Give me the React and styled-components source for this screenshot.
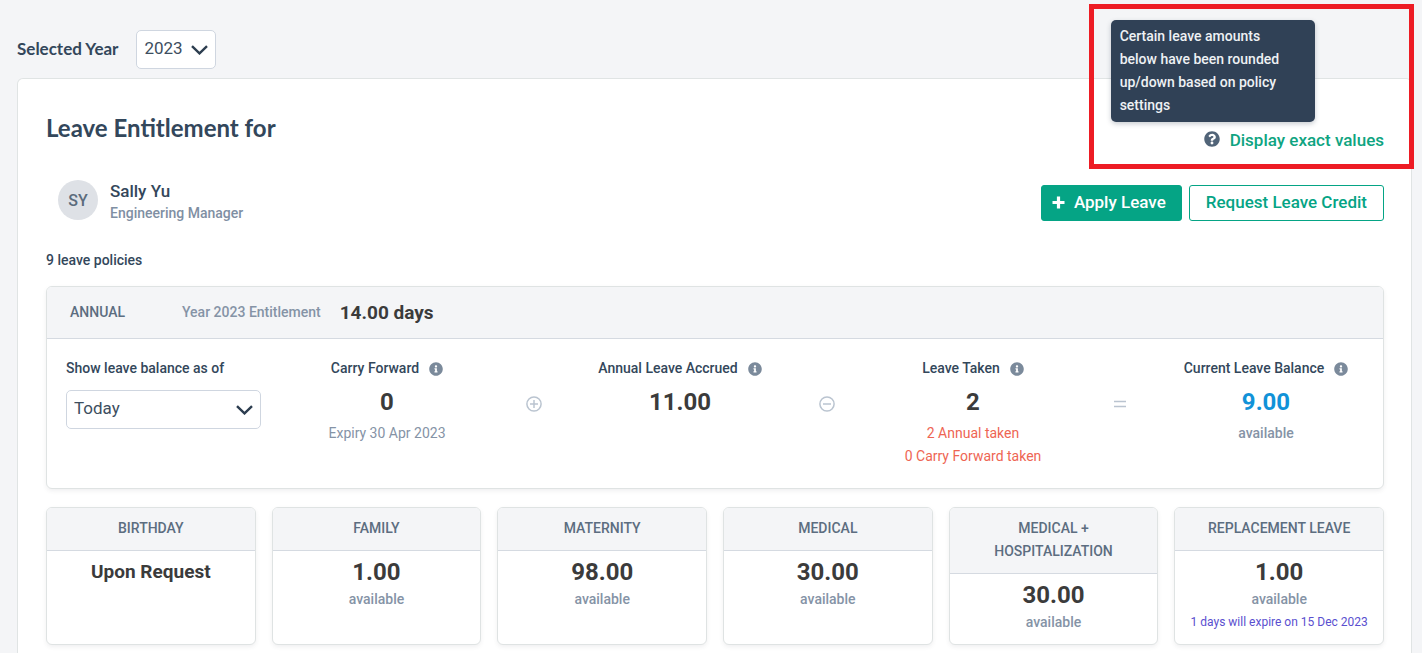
import React from 'react';
import styled, { createGlobalStyle } from 'styled-components';
import { FaQuestionCircle, FaInfoCircle } from 'react-icons/fa';

const GlobalStyle = createGlobalStyle`
  *, *::before, *::after { box-sizing: border-box; }
  body {
    margin: 0;
    background: #f4f5f7;
    color: #33475b;
    font-family: Roboto, "Liberation Sans", sans-serif;
    font-size: 14px;
    line-height: 23px;
  }
  html { scrollbar-width: none; }
  h1, h2, h3, p { margin: 0; }
`;

const Page = styled.div`
  position: relative;
  padding: 30px 10px 0 17px;
`;

const YearBar = styled.div`
  display: flex;
  align-items: center;
  gap: 18px;
  margin-bottom: 9px;
`;

const YearLabel = styled.label`
  padding-bottom: 2px;
  font: 700 17px/24px Lato, sans-serif;
`;

const SelectBox = styled.div`
  display: grid;
  align-items: center;
  width: ${(p) => p.$width};
  height: 39px;

  > * { grid-area: 1 / 1; }
  > svg { justify-self: end; margin-right: 8px; pointer-events: none; }
`;

const Select = styled.select`
  appearance: none;
  width: 100%;
  height: 100%;
  padding: 0 7px 3px;
  border: 1px solid #cfd6e0;
  border-radius: 5px;
  background: #fff;
  color: #3d4e60;
  font: 400 17px/24px Roboto, sans-serif;
`;

const Card = styled.main`
  padding: 35px 27px 8px 28px;
  border: 1px solid #e0e4e4;
  border-bottom: 0;
  border-radius: 6px 6px 0 0;
  background: #fff;
`;

const TitleRow = styled.div`
  display: flex;
  justify-content: space-between;
  align-items: flex-start;
`;

const Title = styled.h1`
  font: 700 24px/28px Lato, sans-serif;
`;

const ExactValues = styled.div`
  display: flex;
  align-items: center;
  gap: 10px;
  padding-top: 15px;
`;

const HelpAnchor = styled.span`
  position: relative;
  display: flex;
  padding-bottom: 3px;
  color: #516478;
`;

const Tooltip = styled.span`
  position: absolute;
  right: -95px;
  bottom: 28px;
  width: 204px;
  padding: 5px 24px 5px 9px;
  border-radius: 5px;
  background: #304156;
  color: #eef1f4;
  box-shadow: 0 2px 5px rgba(40, 55, 75, 0.25);
  font-weight: 500;
`;

const ExactLink = styled.a`
  color: #0fa481;
  font-size: 17px;
  font-weight: 500;
  text-decoration: none;
`;

const Highlight = styled.div`
  position: absolute;
  top: 4px;
  right: 8px;
  width: 325px;
  height: 165px;
  border: 5px solid #ed1c24;
  pointer-events: none;
`;

const PersonRow = styled.div`
  display: flex;
  justify-content: space-between;
  align-items: center;
  margin-top: 28px;
  padding-left: 12px;
`;

const Person = styled.div`
  display: flex;
  align-items: flex-start;
  gap: 12px;
`;

const Avatar = styled.span`
  display: grid;
  place-items: center;
  width: 40px;
  height: 40px;
  border-radius: 50%;
  background: #dee1e6;
  color: #5b6b7c;
  font-size: 16px;
  font-weight: 500;
`;

const Name = styled.h2`
  font-size: 17px;
  line-height: 22px;
  font-weight: 500;
`;

const Role = styled.p`
  color: #7f8fa3;
  font-weight: 500;
`;

const Actions = styled.div`
  display: flex;
  gap: 7px;
`;

const Button = styled.button`
  display: flex;
  align-items: center;
  gap: 9px;
  height: 36px;
  padding: 0 ${(p) => (p.$primary ? '15px 0 10px' : '16px')};
  border: 1px solid #05a485;
  border-radius: 3px;
  background: ${(p) => (p.$primary ? '#05a485' : '#fff')};
  color: ${(p) => (p.$primary ? '#fff' : '#05a485')};
  font: 500 17px/23px Roboto, sans-serif;
`;

const PolicyCount = styled.p`
  margin: 24px 0 14px;
  font-weight: 500;
`;

const Panel = styled.section`
  overflow: hidden;
  border: 1px solid #dfe3e3;
  border-radius: 6px;
  background: #fff;
  box-shadow: 0 2px 4px rgba(60, 70, 80, 0.08);
`;

const PanelHeader = styled.header`
  display: flex;
  align-items: center;
  height: 52px;
  padding: 0 23px;
  border-bottom: 1px solid #d5dae1;
  background: #f4f5f7;
`;

const PolicyName = styled.h2`
  width: 112px;
  color: #5c6d80;
  font-size: 14px;
  font-weight: 500;
`;

const Entitlement = styled.span`
  margin-right: 19px;
  color: #8593a6;
  font-weight: 500;
`;

const Days = styled.strong`
  color: #3b3b3b;
  font-size: 19px;
  font-weight: 700;
`;

const Balance = styled.div`
  display: grid;
  grid-template-columns: 231px 180fr repeat(3, 113fr 180fr);
  min-height: 149px;
  padding: 18px 27px 19px 19px;
`;

const FieldLabel = styled.label`
  display: block;
  margin-bottom: 10px;
  font-weight: 500;
`;

const Metric = styled.div`
  display: flex;
  flex-direction: column;
  align-items: center;
  text-align: center;
`;

const MetricLabel = styled.h3`
  display: flex;
  align-items: center;
  gap: 10px;
  font-size: 14px;
  font-weight: 500;
  white-space: nowrap;

  svg { color: #7b8a9b; }
`;

const Value = styled.strong`
  margin: ${(p) => (p.$panel ? '6px 0 4px' : '0')};
  color: ${(p) => (p.$accent ? '#1192d8' : '#3b3b3b')};
  font-size: ${(p) => (p.$text ? '19px' : '24px')};
  font-weight: 700;
  line-height: 32px;
`;

const Note = styled.span`
  color: ${(p) => ({ danger: '#ee6553', expiry: '#5a4fcf' })[p.$tone] || '#8593a6'};
  font-size: ${(p) => (p.$tone === 'expiry' ? '12px' : '14px')};
  font-weight: ${(p) => (p.$strong ? 500 : 400)};
  white-space: nowrap;
`;

const Operator = styled.div`
  display: flex;
  justify-content: center;
  padding-top: 39px;
`;

const PolicyGrid = styled.div`
  display: grid;
  grid-template-columns: repeat(6, minmax(0, 1fr));
  gap: 16px;
  margin-top: 18px;
`;

const PolicyHeader = styled.h2`
  padding: 9px 32px 10px;
  border-bottom: 1px solid #d5dae1;
  background: #f4f5f7;
  color: #5c6d80;
  font-size: 14px;
  font-weight: 500;
  line-height: 23px;
  text-align: center;
`;

const PolicyBody = styled.div`
  display: flex;
  flex-direction: column;
  align-items: center;
  padding: 5px 8px 10px;
`;

const Chevron = () => (
  <svg width="17" height="10" viewBox="0 0 17 10" fill="none" aria-hidden="true">
    <path d="M1 1.2 8.5 8.4 16 1.2" stroke="#2d3e50" strokeWidth="2.4" />
  </svg>
);

const PlusIcon = () => (
  <svg width="13" height="13" viewBox="0 0 13 13" fill="none" aria-hidden="true">
    <path d="M6.5 .5v12M.5 6.5h12" stroke="#fff" strokeWidth="3.2" strokeLinecap="butt" />
  </svg>
);

const OperatorIcon = ({ kind }) => (
  <svg width="16" height="16" viewBox="0 0 16 16" fill="none" stroke="#bac4d0" strokeWidth="1.5" role="img" aria-label={kind}>
    {kind === 'equals' ? (
      <path d="M2 5.5h12M2 10.5h12" />
    ) : (
      <>
        <circle cx="8" cy="8" r="7.1" />
        <path d={kind === 'plus' ? 'M4 8h8M8 4v8' : 'M4 8h8'} />
      </>
    )}
  </svg>
);

const metrics = [
  { label: 'Carry Forward', value: '0', notes: ['Expiry 30 Apr 2023'] },
  { operator: 'plus' },
  { label: 'Annual Leave Accrued', value: '11.00', notes: [] },
  { operator: 'minus' },
  { label: 'Leave Taken', value: '2', notes: ['2 Annual taken', '0 Carry Forward taken'], tone: 'danger' },
  { operator: 'equals' },
  { label: 'Current Leave Balance', value: '9.00', notes: ['available'], accent: true, strong: true },
];

const policies = [
  { name: 'BIRTHDAY', value: 'Upon Request', text: true },
  { name: 'FAMILY', value: '1.00' },
  { name: 'MATERNITY', value: '98.00' },
  { name: 'MEDICAL', value: '30.00' },
  { name: 'MEDICAL + HOSPITALIZATION', value: '30.00' },
  { name: 'REPLACEMENT LEAVE', value: '1.00', expiry: '1 days will expire on 15 Dec 2023' },
];

export default function App() {
  return (
    <Page>
      <GlobalStyle />
      <YearBar>
        <YearLabel htmlFor="year">Selected Year</YearLabel>
        <SelectBox $width="80px">
          <Select id="year" defaultValue="2023">
            <option>2023</option>
          </Select>
          <Chevron />
        </SelectBox>
      </YearBar>

      <Card>
        <TitleRow>
          <Title>Leave Entitlement for</Title>
          <ExactValues>
            <HelpAnchor>
              <FaQuestionCircle size={16} />
              <Tooltip role="tooltip">
                Certain leave amounts below have been rounded up/down based on policy settings
              </Tooltip>
            </HelpAnchor>
            <ExactLink href="#exact">Display exact values</ExactLink>
          </ExactValues>
        </TitleRow>

        <PersonRow>
          <Person>
            <Avatar>SY</Avatar>
            <div>
              <Name>Sally Yu</Name>
              <Role>Engineering Manager</Role>
            </div>
          </Person>
          <Actions>
            <Button type="button" $primary>
              <PlusIcon />
              Apply Leave
            </Button>
            <Button type="button">Request Leave Credit</Button>
          </Actions>
        </PersonRow>

        <PolicyCount>9 leave policies</PolicyCount>

        <Panel>
          <PanelHeader>
            <PolicyName>ANNUAL</PolicyName>
            <Entitlement>Year 2023 Entitlement</Entitlement>
            <Days>14.00 days</Days>
          </PanelHeader>
          <Balance>
            <div>
              <FieldLabel htmlFor="as-of">Show leave balance as of</FieldLabel>
              <SelectBox $width="195px">
                <Select id="as-of" defaultValue="Today">
                  <option>Today</option>
                </Select>
                <Chevron />
              </SelectBox>
            </div>
            {metrics.map((m) =>
              m.operator ? (
                <Operator key={m.operator}>
                  <OperatorIcon kind={m.operator} />
                </Operator>
              ) : (
                <Metric key={m.label}>
                  <MetricLabel>
                    {m.label}
                    <FaInfoCircle size={14} />
                  </MetricLabel>
                  <Value $panel $accent={m.accent}>{m.value}</Value>
                  {m.notes.map((n) => (
                    <Note key={n} $tone={m.tone} $strong={m.strong}>{n}</Note>
                  ))}
                </Metric>
              )
            )}
          </Balance>
        </Panel>

        <PolicyGrid>
          {policies.map((p) => (
            <Panel key={p.name}>
              <PolicyHeader>{p.name}</PolicyHeader>
              <PolicyBody>
                <Value $text={p.text}>{p.value}</Value>
                {!p.text && <Note $strong>available</Note>}
                {p.expiry && <Note $tone="expiry">{p.expiry}</Note>}
              </PolicyBody>
            </Panel>
          ))}
        </PolicyGrid>
      </Card>
      <Highlight />
    </Page>
  );
}
